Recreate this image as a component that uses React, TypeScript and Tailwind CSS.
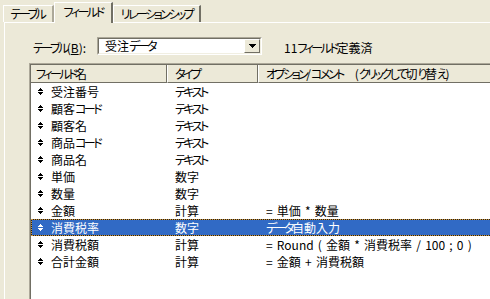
import React from 'react';

const rows = [
  { name: '受注番号', type: 'テキスト', opt: '' },
  { name: '顧客コード', type: 'テキスト', opt: '' },
  { name: '顧客名', type: 'テキスト', opt: '' },
  { name: '商品コード', type: 'テキスト', opt: '' },
  { name: '商品名', type: 'テキスト', opt: '' },
  { name: '単価', type: '数字', opt: '' },
  { name: '数量', type: '数字', opt: '' },
  { name: '金額', type: '計算', opt: '= 単価 * 数量' },
  { name: '消費税率', type: '数字', opt: 'データ自動入力', selected: true },
  { name: '消費税額', type: '計算', opt: '= Round ( 金額 * 消費税率 / 100 ; 0 )' },
  { name: '合計金額', type: '計算', opt: '= 金額 + 消費税額' },
];

// kana runs are much narrower in the original bitmap UI font, so tighten them
function J({ t }: { t: string }) {
  const parts = t.split(/([\u3040-\u30FF]+)/);
  return (
    <>
      {parts.map((p, i) =>
        /^[\u3040-\u30FF]+$/.test(p) ? (
          <span key={i} className="tracking-[-2.5px]">
            {p}
          </span>
        ) : (
          <span key={i}>{p}</span>
        )
      )}
    </>
  );
}

function SortIcon({ color }: { color: string }) {
  return (
    <svg width="5" height="7" viewBox="0 0 5 7" shapeRendering="crispEdges" className="shrink-0">
      <rect x="2" y="0" width="1" height="1" fill={color} />
      <rect x="1" y="1" width="3" height="1" fill={color} />
      <rect x="0" y="2" width="5" height="1" fill={color} />
      <rect x="0" y="4" width="5" height="1" fill={color} />
      <rect x="1" y="5" width="3" height="1" fill={color} />
      <rect x="2" y="6" width="1" height="1" fill={color} />
    </svg>
  );
}

function Row({ r }: { r: (typeof rows)[number] }) {
  const inner = (
    <div
      className={`flex h-[17px] items-center ${
        r.selected ? 'border border-dotted border-[#ce953a] bg-[#316ac5] bg-clip-padding text-white' : 'border border-transparent text-black'
      }`}
    >
      <div className="flex w-[135px] shrink-0 items-center pl-[6px]">
        <SortIcon color={r.selected ? '#ffffff' : '#000000'} />
        <span className="ml-[8px] whitespace-nowrap">
          <J t={r.name} />
        </span>
      </div>
      <div className="w-[91px] shrink-0 pl-[8px] whitespace-nowrap">
        <J t={r.type} />
      </div>
      <div className="pl-[8px] whitespace-pre [word-spacing:1.5px]">
        <J t={r.opt} />
      </div>
    </div>
  );
  return r.selected ? <div className="bg-[#202020]">{inner}</div> : inner;
}

export default function App() {
  return (
    <div
      className="flex h-[299px] w-[490px] flex-col overflow-hidden bg-[#ece9d8] text-[12px] leading-none text-black [font-feature-settings:'palt']"
      style={{ fontFamily: '"Noto Sans CJK JP", "Noto Sans", sans-serif' }}
    >
      {/* tabs */}
      <div className="flex h-[22px] shrink-0 items-end pl-[3px]">
        <div className="flex h-[17px] w-[51px] items-center justify-center whitespace-nowrap border-l border-t border-white border-r-2 border-r-[#aca899] pr-[1px]">
          <J t="テーブル" />
        </div>
        <div className="relative z-10 -mb-px flex h-[21px] w-[59px] items-center justify-center whitespace-nowrap border-l border-t border-white border-r-2 border-r-[#716f64] bg-[#ece9d8] pb-[2px]">
          <J t="フィールド" />
        </div>
        <div className="flex h-[17px] w-[88px] items-center justify-center whitespace-nowrap border-l border-t border-white border-r-2 border-r-[#716f64]">
          <J t="リレーションシップ" />
        </div>
      </div>

      {/* panel */}
      <div className="ml-[4px] flex flex-1 flex-col border-l border-t border-white">
        <div className="mt-[14px] flex h-[18px] items-center">
          <div className="ml-[28px] mt-[3px] w-[64px] whitespace-nowrap">
            <J t="テーブル" />(<span className="underline">B</span>):
          </div>
          <div className="flex h-[18px] w-[165px] items-stretch border border-[#aca899] border-b-white border-r-white">
            <div className="flex flex-1 items-stretch border border-[#716f64] border-b-[#f1efe2] border-r-[#f1efe2] bg-white">
              <div className="flex flex-1 items-center pl-[6px] whitespace-nowrap">
                <J t="受注データ" />
              </div>
              <div className="flex w-[16px] items-center justify-center border border-white border-b-[#716f64] border-r-[#716f64] bg-[#ece9d8]">
                <svg width="7" height="4" viewBox="0 0 7 4" shapeRendering="crispEdges">
                  <path d="M0 0h7v1H0zM1 1h5v1H1zM2 2h3v1H2zM3 3h1v1H3z" fill="#000" />
                </svg>
              </div>
            </div>
          </div>
          <div className="ml-[22px] mt-[3px] whitespace-nowrap">
            <J t="11フィールド定義済" />
          </div>
        </div>

        {/* list */}
        <div className="ml-[24px] mt-[8px] w-[470px] flex-1 border-l border-t border-[#aca899]">
          <div className="h-full border-l border-t border-[#716f64] bg-white">
            <div className="flex h-[18px] items-stretch bg-[#ece9d8]">
              <div className="flex w-[136px] shrink-0 items-center border-b border-r border-[#716f64] pl-[5px] whitespace-nowrap">
                <J t="フィールド名" />
              </div>
              <div className="flex w-[91px] shrink-0 items-center border-b border-l border-r border-white border-b-[#716f64] border-r-[#716f64] pl-[7px]">
                <J t="タイプ" />
              </div>
              <div className="flex flex-1 items-center border-b border-l border-white border-b-[#716f64] pl-[7px] whitespace-pre">
                <J t="オプション/コメント　(クリックして切り替え)" />
              </div>
            </div>
            <div className="flex flex-col">
              {rows.map((r) => (
                <Row key={r.name} r={r} />
              ))}
            </div>
          </div>
        </div>
      </div>
    </div>
  );
}
